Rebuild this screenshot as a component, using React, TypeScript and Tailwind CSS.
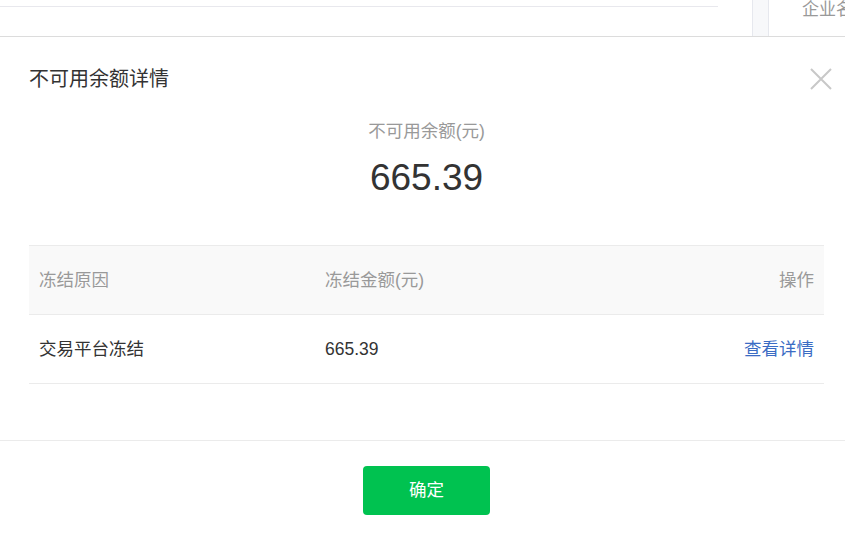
const font = { fontFamily: '"Liberation Sans", "Noto Sans CJK SC", sans-serif' };

const CloseIcon = () => (
  <svg width="22" height="22" viewBox="0 0 22 22" className="text-[#c8c8c8]">
    <path d="M1 1 21 21M21 1 1 21" stroke="currentColor" strokeWidth="2" fill="none" />
  </svg>
);

export default function App() {
  return (
    <div className="w-[845px] h-[540px] overflow-hidden bg-white" style={font}>
      <div className="w-[853px] h-full flex flex-col">
        {/* page behind the dialog */}
        <div className="h-[36px] flex shrink-0">
          <div className="w-[718px] h-[7px] border-b border-[#e8e8ed] shrink-0" />
          <div className="w-[34px] shrink-0" />
          <div className="w-[17px] h-full bg-[#f7f8fa] border-x border-[#e6e8ee] shrink-0" />
          <div className="pl-[33px] -mt-[2px] text-[17px] leading-[24px] text-[#999] whitespace-nowrap">企业名称</div>
        </div>

        {/* dialog */}
        <div className="flex-1 flex flex-col border-t border-[#dcdcdc]">
          <div className="flex items-center justify-between pl-[29px] pr-[21px] pt-[28px]">
            <div className="text-[20px] leading-[28px] text-[#333]">不可用余额详情</div>
            <CloseIcon />
          </div>

          <div className="flex flex-col items-center mt-[25px]">
            <div className="text-[17.5px] leading-[26px] text-[#999]">不可用余额(元)</div>
            <div className="text-[37px] leading-[44px] text-[#333] mt-[12px]">665.39</div>
          </div>

          <div className="mx-[29px] mt-[45px] text-[17.5px]">
            <div className="grid grid-cols-[286px_286px_1fr] h-[70px] items-center bg-[#f9f9f9] border-y border-[#ebebeb] text-[#999] px-[10px]">
              <div>冻结原因</div>
              <div>冻结金额(元)</div>
              <div className="text-right">操作</div>
            </div>
            <div className="grid grid-cols-[286px_286px_1fr] h-[69px] items-center border-b border-[#ebebeb] text-[#333] px-[10px]">
              <div>交易平台冻结</div>
              <div>665.39</div>
              <div className="text-right text-[#3b6cc4]">查看详情</div>
            </div>
          </div>

          <div className="mt-[56px] border-t border-[#ebebeb] flex justify-center pt-[25px]">
            <button className="w-[127px] h-[49px] rounded-[4px] bg-[#00c250] text-white text-[17.5px]">确定</button>
          </div>
        </div>
      </div>
    </div>
  );
}
